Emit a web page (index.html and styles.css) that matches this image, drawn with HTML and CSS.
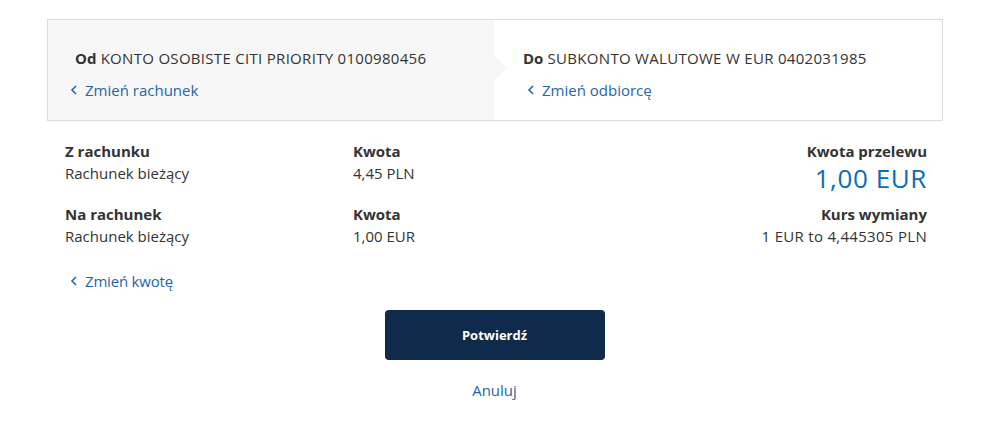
FILE: index.html
```html
<!DOCTYPE html>
<html lang="pl">
<head>
  <meta charset="UTF-8" />
  <meta name="viewport" content="width=device-width, initial-scale=1.0"/>
  <title>Potwierdzenie przelewu</title>
  <link rel="stylesheet" href="styles.css">
</head>
<body>
  <div class="container">
    <div class="accounts">
      <div class="account account-from">
        <p class="account-name"><strong>Od</strong> KONTO OSOBISTE CITI PRIORITY 0100980456</p>
        <a class="change-link" href="#">
          <svg class="chevron" width="8" height="10" viewBox="0 0 8 10"><path d="M6 1 L2 5 L6 9" fill="none" stroke="currentColor" stroke-width="1.6"/></svg>
          Zmień rachunek
        </a>
      </div>
      <div class="account account-to">
        <p class="account-name"><strong>Do</strong> SUBKONTO WALUTOWE W EUR 0402031985</p>
        <a class="change-link" href="#">
          <svg class="chevron" width="8" height="10" viewBox="0 0 8 10"><path d="M6 1 L2 5 L6 9" fill="none" stroke="currentColor" stroke-width="1.6"/></svg>
          Zmień odbiorcę
        </a>
      </div>
    </div>

    <div class="details">
      <div class="field">
        <div class="label">Z rachunku</div>
        <div class="value">Rachunek bieżący</div>
      </div>
      <div class="field">
        <div class="label">Kwota</div>
        <div class="value">4,45 PLN</div>
      </div>
      <div class="field field-right">
        <div class="label">Kwota przelewu</div>
        <div class="value value-big">1,00 EUR</div>
      </div>

      <div class="field">
        <div class="label">Na rachunek</div>
        <div class="value">Rachunek bieżący</div>
      </div>
      <div class="field">
        <div class="label">Kwota</div>
        <div class="value">1,00 EUR</div>
      </div>
      <div class="field field-right">
        <div class="label">Kurs wymiany</div>
        <div class="value rate">1 EUR to 4,445305 PLN</div>
      </div>
    </div>

    <a class="change-link change-amount" href="#">
      <svg class="chevron" width="8" height="10" viewBox="0 0 8 10"><path d="M6 1 L2 5 L6 9" fill="none" stroke="currentColor" stroke-width="1.6"/></svg>
      Zmień kwotę
    </a>

    <div class="actions">
      <button class="confirm-button">Potwierdź</button>
      <a class="cancel-link" href="#">Anuluj</a>
    </div>
  </div>
</body>
</html>
```

FILE: styles.css
```css
body {
  margin: 0;
  font-family: "Open Sans", "Liberation Sans", sans-serif;
  font-size: 15px;
  color: #333333;
  background-color: #ffffff;
}

.container {
  width: 896px;
  margin-left: 47px;
  padding-top: 19px;
}

.accounts {
  display: flex;
  border: 1px solid #dcdcdc;
}

.account {
  flex: 1;
  padding: 27px 20px 19px 27px;
}

.account-from {
  position: relative;
  background-color: #f7f7f7;
}

.account-from::after {
  content: "";
  position: absolute;
  right: -13px;
  top: 35px;
  border-left: 13px solid #f7f7f7;
  border-top: 13px solid transparent;
  border-bottom: 13px solid transparent;
}

.account-to {
  padding-left: 29px;
}

.account-name {
  margin: 0 0 10px 0;
  line-height: 22px;
  letter-spacing: 0.3px;
}

.account-name strong {
  font-weight: 700;
  letter-spacing: 0;
}

.change-link {
  display: inline-flex;
  align-items: center;
  gap: 7px;
  line-height: 22px;
  color: #2566a8;
  text-decoration: none;
}

.account-from .change-link {
  margin-left: -5px;
}

.account-to .change-link {
  margin-left: 4px;
}

.chevron {
  display: block;
}

.details {
  display: grid;
  grid-template-columns: 288px 1fr auto;
  row-gap: 9px;
  padding: 19px 16px 0 18px;
}

.field .label {
  font-weight: 700;
  line-height: 22px;
}

.field .value {
  line-height: 22px;
}

.field-right {
  text-align: right;
}

.field .value-big {
  font-size: 26px;
  line-height: 32px;
  letter-spacing: 0.6px;
  color: #0a6cb3;
}

.rate {
  letter-spacing: 0.3px;
}

.change-amount {
  margin: 23px 0 0 23px;
  letter-spacing: -0.2px;
}

.actions {
  display: flex;
  flex-direction: column;
  align-items: center;
  padding-top: 18px;
  width: 895px;
}

.confirm-button {
  width: 220px;
  height: 50px;
  border: none;
  border-radius: 4px;
  background-color: #0f2a4a;
  color: #ffffff;
  font-family: inherit;
  font-size: 13px;
  font-weight: 700;
  cursor: pointer;
}

.cancel-link {
  margin-top: 19px;
  line-height: 22px;
  color: #2566a8;
  text-decoration: none;
}
```
